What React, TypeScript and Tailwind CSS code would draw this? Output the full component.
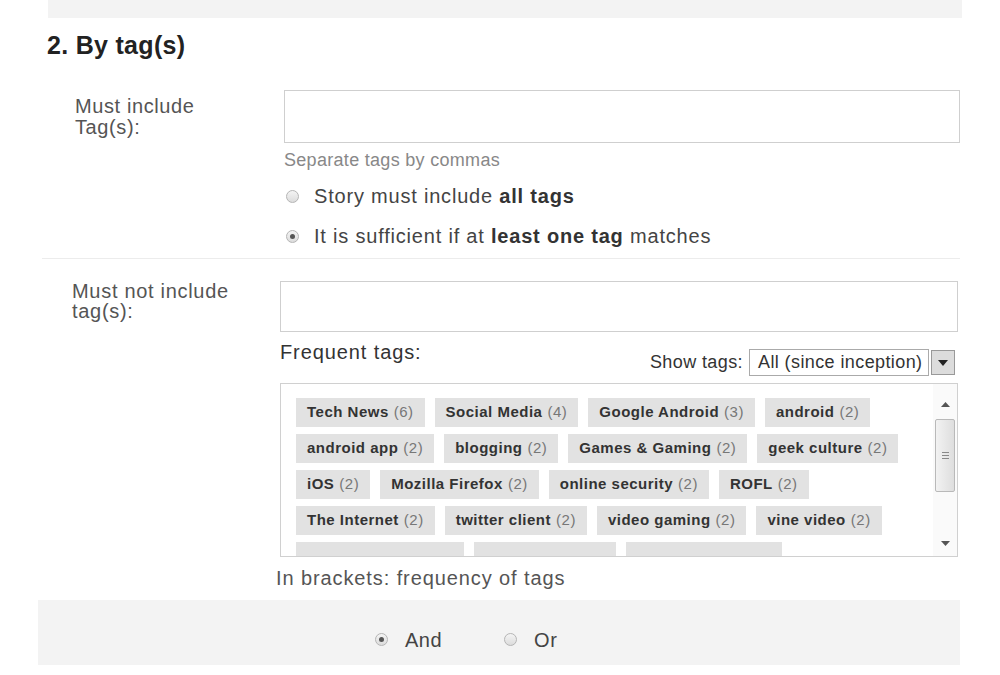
import { useState } from "react";

const tagRows: [string, number][][] = [
  [["Tech News", 6], ["Social Media", 4], ["Google Android", 3], ["android", 2]],
  [["android app", 2], ["blogging", 2], ["Games & Gaming", 2], ["geek culture", 2]],
  [["iOS", 2], ["Mozilla Firefox", 2], ["online security", 2], ["ROFL", 2]],
  [["The Internet", 2], ["twitter client", 2], ["video gaming", 2], ["vine video", 2]],
];

// next row is scrolled out of view, only the top of its chips shows
const hiddenRow = [168, 142, 156];

function Radio({ checked }: { checked?: boolean }) {
  return (
    <span className="flex h-[13px] w-[13px] shrink-0 items-center justify-center rounded-full border border-[#b5b5b5] bg-gradient-to-b from-[#f4f4f4] to-[#dcdcdc]">
      {checked && <span className="h-[5px] w-[5px] rounded-full bg-[#555]" />}
    </span>
  );
}

function Tag({ name, count }: { name: string; count: number }) {
  return (
    <span className="flex h-[29px] items-center bg-[#e2e2e2] px-[11px] text-[15px] tracking-[0.5px] text-[#333]">
      <span className="font-bold">{name}</span>
      <span className="ml-[5px] text-[#777]">({count})</span>
    </span>
  );
}

export default function App() {
  const [match, setMatch] = useState<"all" | "one">("one");
  const [mode, setMode] = useState<"and" | "or">("and");

  return (
    <div className="min-h-[675px] w-[1000px] bg-white font-['Liberation_Sans',Arial,sans-serif] text-[#444]">
      <div className="ml-[48px] mr-[38px] h-[18px] bg-[#f3f3f3]" />

      <h2 className="mt-[13px] pl-[47px] text-[25px] font-bold leading-[28px] tracking-[0.3px] text-[#222]">
        2. By tag(s)
      </h2>

      {/* must include */}
      <div className="mt-[31px] flex pl-[75px]">
        <div className="w-[209px] pt-[6px] text-[20px] leading-[21px] tracking-[0.6px] text-[#555]">
          Must include
          <br />
          Tag(s):
        </div>
        <div className="w-[676px]">
          <div className="h-[53px] border border-[#cfcfcf] bg-white" />
          <div className="mt-[7px] text-[18px] leading-[20px] tracking-[0.3px] text-[#888]">
            Separate tags by commas
          </div>
          <div className="mt-[6px]">
            <label
              className="flex h-[40px] items-center gap-[15px] pl-[2px] text-[20px] tracking-[0.8px] text-[#444]"
              onClick={() => setMatch("all")}
            >
              <Radio checked={match === "all"} />
              <span>
                Story must include <b className="text-[#333]">all tags</b>
              </span>
            </label>
            <label
              className="flex h-[40px] items-center gap-[15px] pl-[2px] text-[20px] tracking-[0.8px] text-[#444]"
              onClick={() => setMatch("one")}
            >
              <Radio checked={match === "one"} />
              <span>
                It is sufficient if at <b className="text-[#333]">least one tag</b> matches
              </span>
            </label>
          </div>
        </div>
      </div>

      <div className="ml-[42px] mr-[40px] mt-[2px] border-t border-[#ececec]" />

      {/* must not include */}
      <div className="mt-[22px] flex pl-[72px]">
        <div className="w-[208px] text-[20px] leading-[20px] tracking-[0.7px] text-[#555]">
          Must not include
          <br />
          tag(s):
        </div>
        <div className="w-[678px]">
          <div className="h-[51px] border border-[#cfcfcf] bg-white" />

          <div className="mt-[7px] flex h-[37px] justify-between">
            <span className="self-start pt-[2px] text-[20px] leading-[22px] tracking-[0.9px] text-[#333]">
              Frequent tags:
            </span>
            <div className="flex items-center self-end pr-[3px]">
              <span className="mr-[6px] text-[18px] tracking-[0.4px] text-[#333]">Show tags:</span>
              <div className="flex h-[27px] w-[180px] items-center border border-[#aaa] bg-white pl-[8px] text-[18px] tracking-[0.4px] text-[#333]">
                All (since inception)
              </div>
              <div className="ml-[2px] flex h-[25px] w-[24px] items-center justify-center border border-[#999] bg-[#dcdcdc]">
                <svg width="10" height="6" viewBox="0 0 10 6">
                  <path d="M0 0h10L5 6z" fill="#222" />
                </svg>
              </div>
            </div>
          </div>

          <div className="mt-[7px] flex h-[174px] w-[678px] border border-[#d0d0d0] bg-white">
            <div className="flex-1 overflow-hidden pl-[15px] pt-[14px]">
              <div className="flex flex-col gap-[7px]">
                {tagRows.map((row, i) => (
                  <div key={i} className="flex gap-[10px]">
                    {row.map(([name, count]) => (
                      <Tag key={name} name={name} count={count} />
                    ))}
                  </div>
                ))}
                <div className="flex gap-[10px]">
                  {hiddenRow.map((w) => (
                    <span key={w} className="h-[29px] bg-[#e2e2e2]" style={{ width: w }} />
                  ))}
                </div>
              </div>
            </div>
            <div className="flex w-[24px] flex-col items-center bg-[#fafafa] py-[6px]">
              <svg width="9" height="5" viewBox="0 0 9 5" className="mt-[12px]">
                <path d="M0 5h9L4.5 0z" fill="#555" />
              </svg>
              <div className="mt-[12px] flex h-[73px] w-[20px] flex-col items-center justify-center gap-[2px] rounded-[2px] border border-[#b9b9b9] bg-gradient-to-r from-[#f2f2f2] to-[#dedede]">
                <span className="h-px w-[7px] bg-[#888]" />
                <span className="h-px w-[7px] bg-[#888]" />
                <span className="h-px w-[7px] bg-[#888]" />
              </div>
              <div className="flex-1" />
              <svg width="9" height="5" viewBox="0 0 9 5" className="mb-[4px]">
                <path d="M0 0h9L4.5 5z" fill="#555" />
              </svg>
            </div>
          </div>

          <div className="ml-[-4px] mt-[10px] text-[20px] leading-[22px] tracking-[0.9px] text-[#555]">
            In brackets: frequency of tags
          </div>
        </div>
      </div>

      {/* and / or */}
      <div className="ml-[38px] mr-[40px] mt-[11px] flex h-[65px] items-center gap-[62px] bg-[#f3f3f3] pl-[337px] pt-[14px]">
        <label
          className="flex items-center gap-[17px] text-[20px] tracking-[0.5px] text-[#444]"
          onClick={() => setMode("and")}
        >
          <Radio checked={mode === "and"} />
          And
        </label>
        <label
          className="flex items-center gap-[17px] text-[20px] tracking-[0.5px] text-[#444]"
          onClick={() => setMode("or")}
        >
          <Radio checked={mode === "or"} />
          Or
        </label>
      </div>
    </div>
  );
}
